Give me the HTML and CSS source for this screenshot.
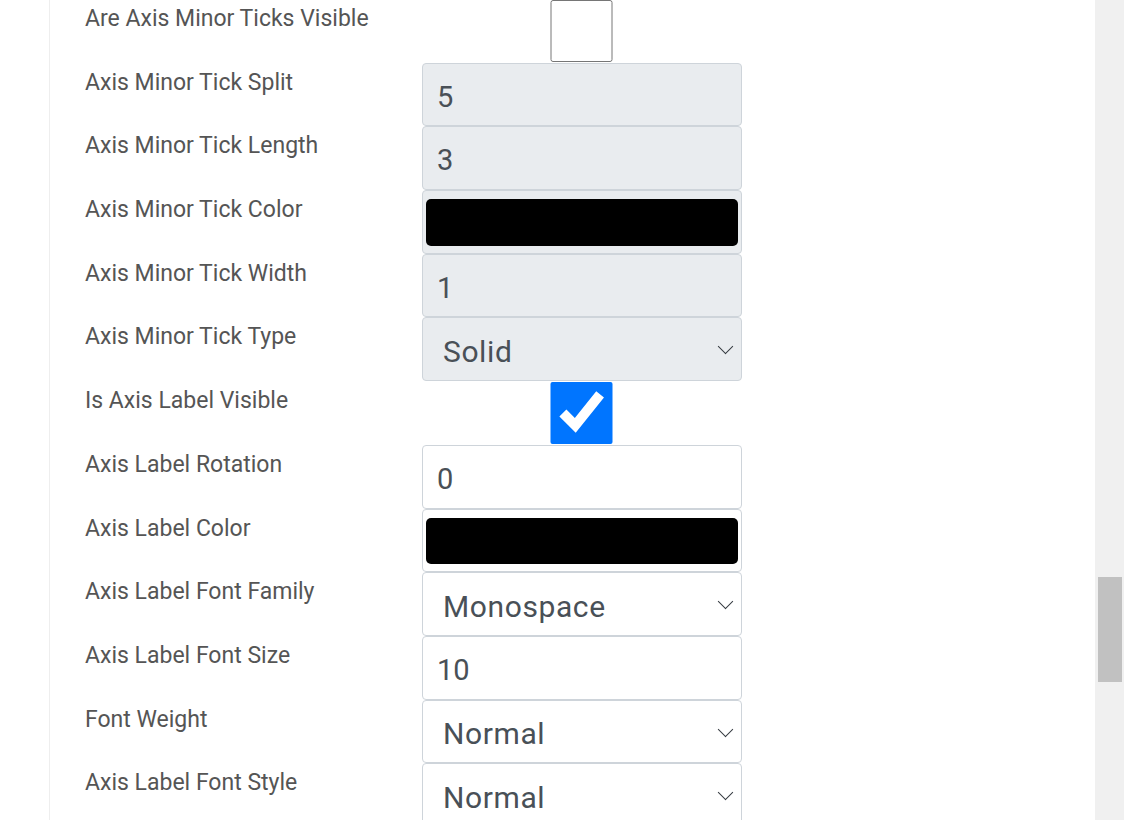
FILE: index.html
```html
<!DOCTYPE html>
<html lang="en">
<head>
    <meta charset="UTF-8">
    <meta name="viewport" content="width=device-width, initial-scale=1.0">
    <title>Axis settings</title>
    <link rel="stylesheet" href="styles.css">
</head>
<body>
    <div class="pagina">
        <div class="painel">
            <div class="linha">
                <label>Are Axis Minor Ticks Visible</label>
                <div class="caixa"><input type="checkbox"></div>
            </div>
            <div class="linha">
                <label>Axis Minor Tick Split</label>
                <input class="campo" type="text" value="5" readonly>
            </div>
            <div class="linha">
                <label>Axis Minor Tick Length</label>
                <input class="campo" type="text" value="3" readonly>
            </div>
            <div class="linha">
                <label>Axis Minor Tick Color</label>
                <input class="campo cor" type="color" value="#000000" disabled>
            </div>
            <div class="linha">
                <label>Axis Minor Tick Width</label>
                <input class="campo" type="text" value="1" readonly>
            </div>
            <div class="linha">
                <label>Axis Minor Tick Type</label>
                <div class="seletor">
                    <select class="campo" disabled>
                        <option>Solid</option>
                        <option>Dashed</option>
                        <option>Dotted</option>
                    </select>
                </div>
            </div>
            <div class="linha">
                <label>Is Axis Label Visible</label>
                <div class="caixa"><input type="checkbox" checked></div>
            </div>
            <div class="linha">
                <label>Axis Label Rotation</label>
                <input class="campo ativo" type="text" value="0">
            </div>
            <div class="linha">
                <label>Axis Label Color</label>
                <input class="campo cor ativo" type="color" value="#000000">
            </div>
            <div class="linha">
                <label>Axis Label Font Family</label>
                <div class="seletor">
                    <select class="campo ativo">
                        <option>Monospace</option>
                        <option>Serif</option>
                        <option>Sans-serif</option>
                    </select>
                </div>
            </div>
            <div class="linha">
                <label>Axis Label Font Size</label>
                <input class="campo ativo" type="text" value="10">
            </div>
            <div class="linha">
                <label>Font Weight</label>
                <div class="seletor">
                    <select class="campo ativo">
                        <option>Normal</option>
                        <option>Bold</option>
                    </select>
                </div>
            </div>
            <div class="linha">
                <label>Axis Label Font Style</label>
                <div class="seletor">
                    <select class="campo ativo">
                        <option>Normal</option>
                        <option>Italic</option>
                    </select>
                </div>
            </div>
        </div>
        <div class="rolagem">
            <div class="barra"></div>
        </div>
    </div>
</body>
</html>
```

FILE: styles.css
```css
* {
    margin: 0;
    padding: 0;
    box-sizing: border-box;
}

body {
    font-family: Roboto, "Liberation Sans", sans-serif;
    background-color: #fff;
    overflow: hidden;
}

.pagina {
    display: flex;
    height: 820px;
    padding-right: 15px;
}

.painel {
    flex: 1;
    margin-left: 49px;
    margin-top: -1px;
    border-left: 1px solid #eeeeee;
    padding-left: 35px;
    overflow: hidden;
}

.linha {
    display: grid;
    grid-template-columns: 337px 320px;
    height: 63.7px;
}

.linha label {
    font-size: 23px;
    line-height: 1.5;
    padding-top: 3px;
    color: #555555;
}

.campo {
    width: 100%;
    height: 100%;
    font-family: inherit;
    font-size: 29px;
    color: #495057;
    background-color: #e9ecef;
    border: 1px solid #ced4da;
    border-radius: 4px;
    padding: 4px 14px 0;
    outline: none;
}

.ativo {
    background-color: #fff;
}

.cor {
    padding: 8px 3px 7px;
    appearance: none;
    -webkit-appearance: none;
}

.cor::-webkit-color-swatch-wrapper {
    padding: 0;
}

.cor::-webkit-color-swatch {
    border: none;
    border-radius: 5px;
}

.seletor {
    position: relative;
}

.seletor select {
    appearance: none;
    -webkit-appearance: none;
    padding-left: 20px;
    font-size: 30px;
    letter-spacing: 0.6px;
    opacity: 1;
}

.seletor::after {
    content: "";
    position: absolute;
    right: 11px;
    top: 24px;
    width: 10px;
    height: 10px;
    border-right: 1.7px solid #343a40;
    border-bottom: 1.7px solid #343a40;
    transform: rotate(45deg);
}

.caixa {
    display: flex;
    padding-left: 128px;
}

.caixa input {
    width: 63px;
    height: 62px;
    margin-top: 1px;
}

.rolagem {
    width: 29px;
    background-color: #f0f0f0;
    padding: 577px 2px 0 3px;
}

.barra {
    height: 105px;
    background-color: #c1c1c1;
}
```
